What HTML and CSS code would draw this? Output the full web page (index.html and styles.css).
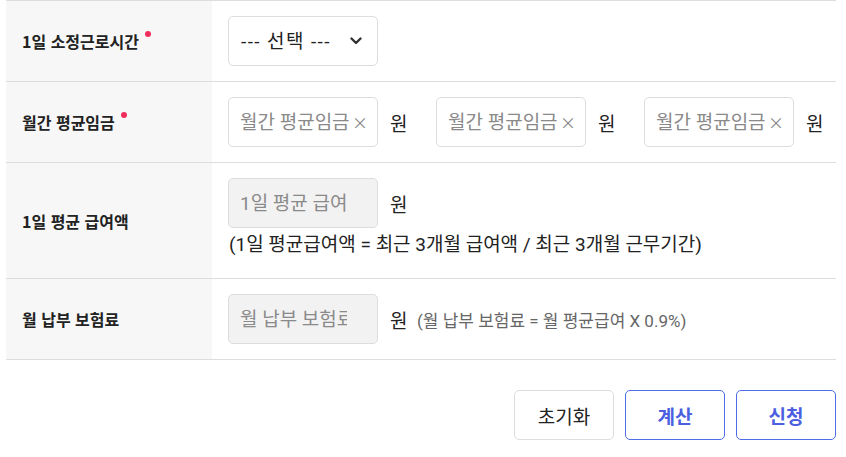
FILE: index.html
```html
<!DOCTYPE html>
<html lang="ko">
<head>
<meta charset="utf-8">
<title>보험료 계산</title>
<link rel="stylesheet" href="styles.css">
</head>
<body>
<div class="page">
  <div class="form">
    <div class="row">
      <div class="label">1일 소정근로시간<span class="req"></span></div>
      <div class="value">
        <div class="line">
          <div class="select-wrap">
            <select class="select">
              <option>--- 선택 ---</option>
            </select>
            <svg class="chev" width="12" height="8" viewBox="0 0 12 8"><path d="M1.5 1.5 L6 6 L10.5 1.5" fill="none" stroke="#333" stroke-width="2.4" stroke-linecap="round" stroke-linejoin="round"/></svg>
          </div>
        </div>
      </div>
    </div>
    <div class="row">
      <div class="label">월간 평균임금<span class="req"></span></div>
      <div class="value">
        <div class="line">
          <div class="group">
            <div class="field"><input type="text" placeholder="월간 평균임금"><span class="clear">×</span></div>
            <span class="unit">원</span>
          </div>
          <div class="group">
            <div class="field"><input type="text" placeholder="월간 평균임금"><span class="clear">×</span></div>
            <span class="unit">원</span>
          </div>
          <div class="group">
            <div class="field"><input type="text" placeholder="월간 평균임금"><span class="clear">×</span></div>
            <span class="unit">원</span>
          </div>
        </div>
      </div>
    </div>
    <div class="row">
      <div class="label">1일 평균 급여액</div>
      <div class="value">
        <div class="line">
          <div class="group">
            <div class="field readonly"><input type="text" placeholder="1일 평균 급여" readonly></div>
            <span class="unit">원</span>
          </div>
        </div>
        <p class="formula">(1일 평균급여액 = 최근 3개월 급여액 / 최근 3개월 근무기간)</p>
      </div>
    </div>
    <div class="row last">
      <div class="label">월 납부 보험료</div>
      <div class="value">
        <div class="line">
          <div class="group">
            <div class="field readonly"><input type="text" placeholder="월 납부 보험료" readonly></div>
            <span class="unit">원</span>
          </div>
          <span class="note">(월 납부 보험료 = 월 평균급여 X 0.9%)</span>
        </div>
      </div>
    </div>
  </div>
  <div class="actions">
    <button class="btn">초기화</button>
    <button class="btn primary">계산</button>
    <button class="btn primary">신청</button>
  </div>
</div>
</body>
</html>
```

FILE: styles.css
```css
* { box-sizing: border-box; }
html, body {
  margin: 0;
  padding: 0;
  background: #fff;
}
body {
  font-family: Roboto, "Noto Sans CJK KR", sans-serif;
  font-size: 19px;
  color: #222;
}
.page {
  width: 846px;
  padding: 0 10px 0 6px;
}
.form {
  border-bottom: 1px solid #dddddd;
}
.row {
  display: flex;
  border-top: 1px solid #dddddd;
}
.label {
  width: 206px;
  flex: none;
  background: #f7f7f7;
  display: flex;
  align-items: center;
  padding-left: 16px;
  font-family: "Noto Sans CJK KR", sans-serif;
  font-weight: 700;
  font-size: 16px;
  line-height: 24px;
  color: #222;
}
.req {
  display: inline-block;
  width: 6px;
  height: 6px;
  border-radius: 50%;
  background: #ef2e5c;
  margin-left: 6px;
  margin-top: -14px;
  align-self: center;
}
.value {
  flex: 1;
  padding: 15px 0 15px 16px;
}
.line {
  display: flex;
  align-items: center;
  height: 50px;
}
.select-wrap {
  position: relative;
  width: 150px;
  height: 50px;
}
.select {
  appearance: none;
  -webkit-appearance: none;
  width: 150px;
  height: 50px;
  border: 1px solid #dddddd;
  border-radius: 5px;
  background: #fff;
  font-family: inherit;
  font-size: 19px;
  letter-spacing: 1.4px;
  color: #222;
  padding: 0 30px 0 12px;
}
.chev {
  position: absolute;
  right: 16px;
  top: 21px;
  pointer-events: none;
}
.group {
  display: flex;
  align-items: center;
  margin-right: 30px;
}
.group:last-child { margin-right: 0; }
.field {
  width: 150px;
  height: 50px;
  border: 1px solid #dddddd;
  border-radius: 5px;
  background: #fff;
  display: flex;
  align-items: center;
  padding: 0 9px 0 11px;
  overflow: hidden;
}
.field input {
  flex: 1;
  min-width: 0;
  border: 0;
  outline: 0;
  background: transparent;
  font-family: inherit;
  font-size: 19px;
  color: #222;
  padding: 0;
}
.field input::placeholder { color: #8a8a8a; }
.field.readonly {
  background: #f2f2f2;
  padding-right: 30px;
}
.clear {
  flex: none;
  font-family: "Noto Sans CJK KR", sans-serif;
  color: #8a8a8a;
  font-size: 16px;
  line-height: 20px;
  margin-left: 0;
}
.unit {
  margin-left: 12px;
  font-size: 19px;
  color: #222;
}
.group .unit { width: 16px; }
.note {
  margin-left: -19px;
  font-size: 17px;
  color: #666;
}
.formula {
  margin: 4px 0 5px 1px;
  line-height: 26px;
  font-size: 19px;
  color: #222;
}
.actions {
  display: flex;
  justify-content: flex-end;
  gap: 11px;
  padding-top: 30px;
}
.btn {
  width: 100px;
  height: 50px;
  border: 1px solid #dddddd;
  border-radius: 5px;
  background: #fff;
  font-family: inherit;
  font-size: 19px;
  color: #222;
  cursor: pointer;
}
.btn.primary {
  border-color: #4e6ce6;
  color: #4b5fe0;
  font-weight: 700;
}
```
